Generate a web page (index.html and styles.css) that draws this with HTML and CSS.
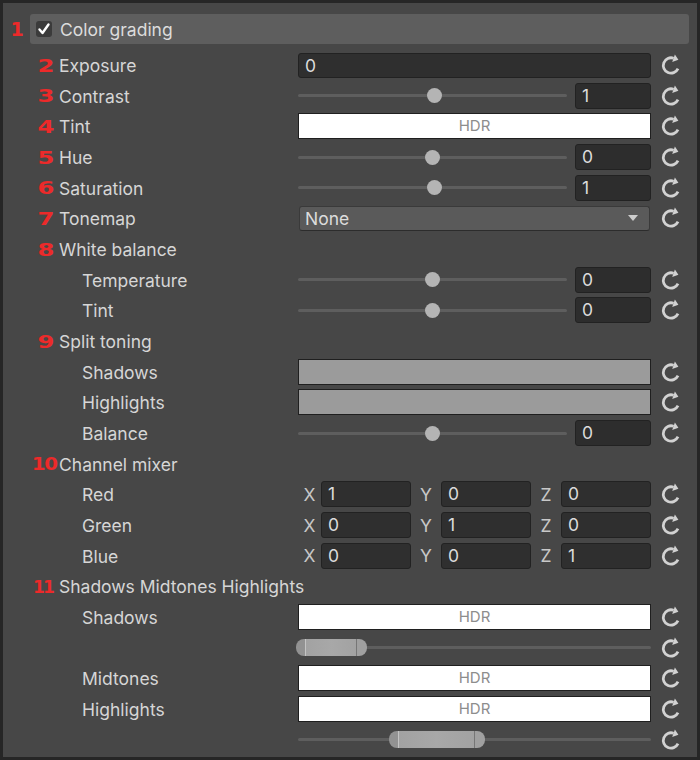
FILE: index.html
```html
<!DOCTYPE html>
<html>
<head>
<meta charset="utf-8">
<link rel="stylesheet" href="styles.css">
</head>
<body>
<div class="panel">
  <div class="head-row">
    <span class="mark mark-1">1</span>
    <div class="header">
      <span class="checkbox"><svg viewBox="0 0 16 16" width="16" height="16"><path d="M3.5 8.5 L6.5 12 L12.5 3.5" fill="none" stroke="#fff" stroke-width="2.4" stroke-linecap="round" stroke-linejoin="round"/></svg></span>
      <span class="head-title">Color grading</span>
    </div>
  </div>

  <div class="rows">
    <div class="row">
      <div class="lab"><span class="mark">2</span><span class="text">Exposure</span></div>
      <div class="ctl"><div class="field">0</div></div>
      <div class="rst"><svg class="reset" viewBox="0 0 20 20"><path d="M17 13.7 A7.7 7.7 0 1 1 12.6 3.2" fill="none" stroke="#d2d2d2" stroke-width="2.8"/><path d="M11.2 7.1 L17.4 4.8 L13.9 -0.4 Z" fill="#d2d2d2"/></svg></div>
    </div>
    <div class="row">
      <div class="lab"><span class="mark">3</span><span class="text">Contrast</span></div>
      <div class="ctl slider-ctl"><div class="track"><span class="thumb" style="left:136px"></span></div><div class="field num">1</div></div>
      <div class="rst"><svg class="reset" viewBox="0 0 20 20"><path d="M17 13.7 A7.7 7.7 0 1 1 12.6 3.2" fill="none" stroke="#d2d2d2" stroke-width="2.8"/><path d="M11.2 7.1 L17.4 4.8 L13.9 -0.4 Z" fill="#d2d2d2"/></svg></div>
    </div>
    <div class="row">
      <div class="lab"><span class="mark">4</span><span class="text">Tint</span></div>
      <div class="ctl"><div class="hdr">HDR</div></div>
      <div class="rst"><svg class="reset" viewBox="0 0 20 20"><path d="M17 13.7 A7.7 7.7 0 1 1 12.6 3.2" fill="none" stroke="#d2d2d2" stroke-width="2.8"/><path d="M11.2 7.1 L17.4 4.8 L13.9 -0.4 Z" fill="#d2d2d2"/></svg></div>
    </div>
    <div class="row">
      <div class="lab"><span class="mark">5</span><span class="text">Hue</span></div>
      <div class="ctl slider-ctl"><div class="track"><span class="thumb" style="left:134px"></span></div><div class="field num">0</div></div>
      <div class="rst"><svg class="reset" viewBox="0 0 20 20"><path d="M17 13.7 A7.7 7.7 0 1 1 12.6 3.2" fill="none" stroke="#d2d2d2" stroke-width="2.8"/><path d="M11.2 7.1 L17.4 4.8 L13.9 -0.4 Z" fill="#d2d2d2"/></svg></div>
    </div>
    <div class="row">
      <div class="lab"><span class="mark">6</span><span class="text">Saturation</span></div>
      <div class="ctl slider-ctl"><div class="track"><span class="thumb" style="left:136px"></span></div><div class="field num">1</div></div>
      <div class="rst"><svg class="reset" viewBox="0 0 20 20"><path d="M17 13.7 A7.7 7.7 0 1 1 12.6 3.2" fill="none" stroke="#d2d2d2" stroke-width="2.8"/><path d="M11.2 7.1 L17.4 4.8 L13.9 -0.4 Z" fill="#d2d2d2"/></svg></div>
    </div>
    <div class="row">
      <div class="lab"><span class="mark">7</span><span class="text">Tonemap</span></div>
      <div class="ctl"><div class="dropdown"><span>None</span><span class="caret"></span></div></div>
      <div class="rst"><svg class="reset" viewBox="0 0 20 20"><path d="M17 13.7 A7.7 7.7 0 1 1 12.6 3.2" fill="none" stroke="#d2d2d2" stroke-width="2.8"/><path d="M11.2 7.1 L17.4 4.8 L13.9 -0.4 Z" fill="#d2d2d2"/></svg></div>
    </div>
    <div class="row">
      <div class="lab"><span class="mark">8</span><span class="text">White balance</span></div>
      <div class="ctl"></div>
      <div class="rst"></div>
    </div>
    <div class="row">
      <div class="lab sub"><span class="text">Temperature</span></div>
      <div class="ctl slider-ctl"><div class="track"><span class="thumb" style="left:134px"></span></div><div class="field num">0</div></div>
      <div class="rst"><svg class="reset" viewBox="0 0 20 20"><path d="M17 13.7 A7.7 7.7 0 1 1 12.6 3.2" fill="none" stroke="#d2d2d2" stroke-width="2.8"/><path d="M11.2 7.1 L17.4 4.8 L13.9 -0.4 Z" fill="#d2d2d2"/></svg></div>
    </div>
    <div class="row">
      <div class="lab sub"><span class="text">Tint</span></div>
      <div class="ctl slider-ctl"><div class="track"><span class="thumb" style="left:134px"></span></div><div class="field num">0</div></div>
      <div class="rst"><svg class="reset" viewBox="0 0 20 20"><path d="M17 13.7 A7.7 7.7 0 1 1 12.6 3.2" fill="none" stroke="#d2d2d2" stroke-width="2.8"/><path d="M11.2 7.1 L17.4 4.8 L13.9 -0.4 Z" fill="#d2d2d2"/></svg></div>
    </div>
    <div class="row">
      <div class="lab"><span class="mark">9</span><span class="text">Split toning</span></div>
      <div class="ctl"></div>
      <div class="rst"></div>
    </div>
    <div class="row">
      <div class="lab sub"><span class="text">Shadows</span></div>
      <div class="ctl"><div class="swatch"></div></div>
      <div class="rst"><svg class="reset" viewBox="0 0 20 20"><path d="M17 13.7 A7.7 7.7 0 1 1 12.6 3.2" fill="none" stroke="#d2d2d2" stroke-width="2.8"/><path d="M11.2 7.1 L17.4 4.8 L13.9 -0.4 Z" fill="#d2d2d2"/></svg></div>
    </div>
    <div class="row">
      <div class="lab sub"><span class="text">Highlights</span></div>
      <div class="ctl"><div class="swatch"></div></div>
      <div class="rst"><svg class="reset" viewBox="0 0 20 20"><path d="M17 13.7 A7.7 7.7 0 1 1 12.6 3.2" fill="none" stroke="#d2d2d2" stroke-width="2.8"/><path d="M11.2 7.1 L17.4 4.8 L13.9 -0.4 Z" fill="#d2d2d2"/></svg></div>
    </div>
    <div class="row">
      <div class="lab sub"><span class="text">Balance</span></div>
      <div class="ctl slider-ctl"><div class="track"><span class="thumb" style="left:134px"></span></div><div class="field num">0</div></div>
      <div class="rst"><svg class="reset" viewBox="0 0 20 20"><path d="M17 13.7 A7.7 7.7 0 1 1 12.6 3.2" fill="none" stroke="#d2d2d2" stroke-width="2.8"/><path d="M11.2 7.1 L17.4 4.8 L13.9 -0.4 Z" fill="#d2d2d2"/></svg></div>
    </div>
    <div class="row">
      <div class="lab"><span class="mark mark-wide">10</span><span class="text">Channel mixer</span></div>
      <div class="ctl"></div>
      <div class="rst"></div>
    </div>
    <div class="row">
      <div class="lab sub"><span class="text">Red</span></div>
      <div class="ctl vec"><span class="axis">X</span><div class="field">1</div><span class="axis">Y</span><div class="field">0</div><span class="axis">Z</span><div class="field">0</div></div>
      <div class="rst"><svg class="reset" viewBox="0 0 20 20"><path d="M17 13.7 A7.7 7.7 0 1 1 12.6 3.2" fill="none" stroke="#d2d2d2" stroke-width="2.8"/><path d="M11.2 7.1 L17.4 4.8 L13.9 -0.4 Z" fill="#d2d2d2"/></svg></div>
    </div>
    <div class="row">
      <div class="lab sub"><span class="text">Green</span></div>
      <div class="ctl vec"><span class="axis">X</span><div class="field">0</div><span class="axis">Y</span><div class="field">1</div><span class="axis">Z</span><div class="field">0</div></div>
      <div class="rst"><svg class="reset" viewBox="0 0 20 20"><path d="M17 13.7 A7.7 7.7 0 1 1 12.6 3.2" fill="none" stroke="#d2d2d2" stroke-width="2.8"/><path d="M11.2 7.1 L17.4 4.8 L13.9 -0.4 Z" fill="#d2d2d2"/></svg></div>
    </div>
    <div class="row">
      <div class="lab sub"><span class="text">Blue</span></div>
      <div class="ctl vec"><span class="axis">X</span><div class="field">0</div><span class="axis">Y</span><div class="field">0</div><span class="axis">Z</span><div class="field">1</div></div>
      <div class="rst"><svg class="reset" viewBox="0 0 20 20"><path d="M17 13.7 A7.7 7.7 0 1 1 12.6 3.2" fill="none" stroke="#d2d2d2" stroke-width="2.8"/><path d="M11.2 7.1 L17.4 4.8 L13.9 -0.4 Z" fill="#d2d2d2"/></svg></div>
    </div>
    <div class="row">
      <div class="lab"><span class="mark mark-narrow">11</span><span class="text">Shadows Midtones Highlights</span></div>
      <div class="ctl"></div>
      <div class="rst"></div>
    </div>
    <div class="row">
      <div class="lab sub"><span class="text">Shadows</span></div>
      <div class="ctl"><div class="hdr">HDR</div></div>
      <div class="rst"><svg class="reset" viewBox="0 0 20 20"><path d="M17 13.7 A7.7 7.7 0 1 1 12.6 3.2" fill="none" stroke="#d2d2d2" stroke-width="2.8"/><path d="M11.2 7.1 L17.4 4.8 L13.9 -0.4 Z" fill="#d2d2d2"/></svg></div>
    </div>
    <div class="row">
      <div class="lab sub"></div>
      <div class="ctl"><div class="track full"><span class="range" style="left:-2px;width:71px"></span></div></div>
      <div class="rst"><svg class="reset" viewBox="0 0 20 20"><path d="M17 13.7 A7.7 7.7 0 1 1 12.6 3.2" fill="none" stroke="#d2d2d2" stroke-width="2.8"/><path d="M11.2 7.1 L17.4 4.8 L13.9 -0.4 Z" fill="#d2d2d2"/></svg></div>
    </div>
    <div class="row">
      <div class="lab sub"><span class="text">Midtones</span></div>
      <div class="ctl"><div class="hdr">HDR</div></div>
      <div class="rst"><svg class="reset" viewBox="0 0 20 20"><path d="M17 13.7 A7.7 7.7 0 1 1 12.6 3.2" fill="none" stroke="#d2d2d2" stroke-width="2.8"/><path d="M11.2 7.1 L17.4 4.8 L13.9 -0.4 Z" fill="#d2d2d2"/></svg></div>
    </div>
    <div class="row">
      <div class="lab sub"><span class="text">Highlights</span></div>
      <div class="ctl"><div class="hdr">HDR</div></div>
      <div class="rst"><svg class="reset" viewBox="0 0 20 20"><path d="M17 13.7 A7.7 7.7 0 1 1 12.6 3.2" fill="none" stroke="#d2d2d2" stroke-width="2.8"/><path d="M11.2 7.1 L17.4 4.8 L13.9 -0.4 Z" fill="#d2d2d2"/></svg></div>
    </div>
    <div class="row">
      <div class="lab sub"></div>
      <div class="ctl"><div class="track full"><span class="range" style="left:91px;width:96px"></span></div></div>
      <div class="rst"><svg class="reset" viewBox="0 0 20 20"><path d="M17 13.7 A7.7 7.7 0 1 1 12.6 3.2" fill="none" stroke="#d2d2d2" stroke-width="2.8"/><path d="M11.2 7.1 L17.4 4.8 L13.9 -0.4 Z" fill="#d2d2d2"/></svg></div>
    </div>
  </div>
</div>
</body>
</html>
```

FILE: styles.css
```css
html, body {
  margin: 0;
  padding: 0;
}
body {
  width: 700px;
  height: 760px;
  background: #262626;
  font-family: Inter, "Noto Sans", sans-serif;
  color: #d6d6d6;
  overflow: hidden;
}
.panel {
  box-sizing: border-box;
  margin: 3px;
  width: 694px;
  height: 754px;
  background: #474747;
  padding-top: 11px;
}
.head-row {
  display: grid;
  grid-template-columns: 27px 659px;
  height: 30px;
  align-items: center;
}
.mark {
  display: inline-block;
  flex: none;
  width: 23px;
  text-align: right;
  color: #ec2a2a;
  font-family: "DejaVu Sans", sans-serif;
  font-weight: bold;
  font-size: 18px;
  line-height: 1;
  transform: scaleX(1.35);
  transform-origin: right center;
  letter-spacing: -1px;
}
.mark-wide {
  width: 27px;
  transform: scaleX(1.1);
}
.mark-narrow {
  transform: scaleX(0.95);
  letter-spacing: -2px;
}
.mark-1 {
  width: 27px;
  text-align: center;
  transform: none;
  font-size: 19px;
}
.header {
  height: 30px;
  background: #5e5e5e;
  border-radius: 3px;
  display: flex;
  align-items: center;
  padding-left: 6px;
  box-sizing: border-box;
}
.checkbox {
  width: 16px;
  height: 16px;
  border-radius: 3px;
  background: #3b3b3b;
  display: flex;
  margin-right: 8px;
}
.head-title {
  font-size: 17.5px;
  color: #dcdcdc;
}
.rows {
  margin-top: 5.7px;
}
.row {
  display: grid;
  grid-template-columns: 295px 353px 1fr;
  height: 30.68px;
  align-items: center;
}
.lab {
  display: flex;
  align-items: center;
  padding-left: 27px;
  white-space: nowrap;
  font-size: 17.5px;
  padding-top: 1px;
  min-width: 0;
}
.lab .text {
  flex: none;
  margin-left: 6px;
}
.lab .mark-wide + .text {
  margin-left: 2px;
}
.lab.sub {
  padding-left: 73px;
}
.ctl {
  display: flex;
  align-items: center;
  height: 26px;
}
.field {
  box-sizing: border-box;
  height: 25px;
  flex: 1;
  background: #2f2f2f;
  border: 1px solid #222;
  border-radius: 3px;
  padding-left: 6px;
  font-size: 17.5px;
  line-height: 23px;
  color: #dcdcdc;
}
.slider-ctl {
  gap: 8px;
}
.track {
  position: relative;
  width: 269px;
  height: 3px;
  background: #5e5e5e;
  border-radius: 2px;
}
.track.full {
  width: 353px;
}
.thumb {
  position: absolute;
  top: -6px;
  width: 15px;
  height: 15px;
  margin-left: -7px;
  border-radius: 50%;
  background: #b4b4b4;
}
.field.num {
  flex: none;
  width: 76px;
  height: 26px;
  background: #2d2d2d;
}
.hdr {
  box-sizing: border-box;
  flex: 1;
  height: 26px;
  background: #ffffff;
  border: 1px solid #1f1f1f;
  text-align: center;
  font-size: 15px;
  line-height: 24px;
  color: #8d8d8d;
}
.swatch {
  box-sizing: border-box;
  flex: 1;
  height: 26px;
  background: #9b9b9b;
  border: 1px solid #1f1f1f;
}
.dropdown {
  box-sizing: border-box;
  flex: 1;
  height: 25px;
  margin: 0 1px;
  background: #5a5a5a;
  border: 1px solid #3a3a3a;
  border-bottom-color: #2c2c2c;
  border-radius: 3px;
  display: flex;
  align-items: center;
  justify-content: space-between;
  padding: 0 11px 0 5px;
  font-size: 17.5px;
  color: #dcdcdc;
}
.caret {
  width: 0;
  height: 0;
  border-left: 5px solid transparent;
  border-right: 5px solid transparent;
  border-top: 6px solid #cdcdcd;
}
.vec {
  display: grid;
  grid-template-columns: 23px 90px 30px 90px 30px 90px;
  align-items: center;
}
.vec .field {
  height: 26px;
}
.axis {
  text-align: center;
  font-size: 17.5px;
  color: #c8c8c8;
}
.rst {
  display: flex;
  align-items: center;
  padding-left: 10px;
}
.reset {
  width: 20px;
  height: 20px;
  display: block;
  overflow: visible;
}
.range {
  position: absolute;
  top: -7px;
  height: 17px;
  border-radius: 8px;
  background:
    linear-gradient(to right,
      #929292 0, #929292 9px,
      #c4c4c4 9px, #c4c4c4 10px,
      #a2a2a2 10px, #a8a8a8 50%, #a2a2a2 calc(100% - 11px),
      #767676 calc(100% - 11px), #767676 calc(100% - 10px),
      #a0a0a0 calc(100% - 10px), #a0a0a0 100%);
}
```
